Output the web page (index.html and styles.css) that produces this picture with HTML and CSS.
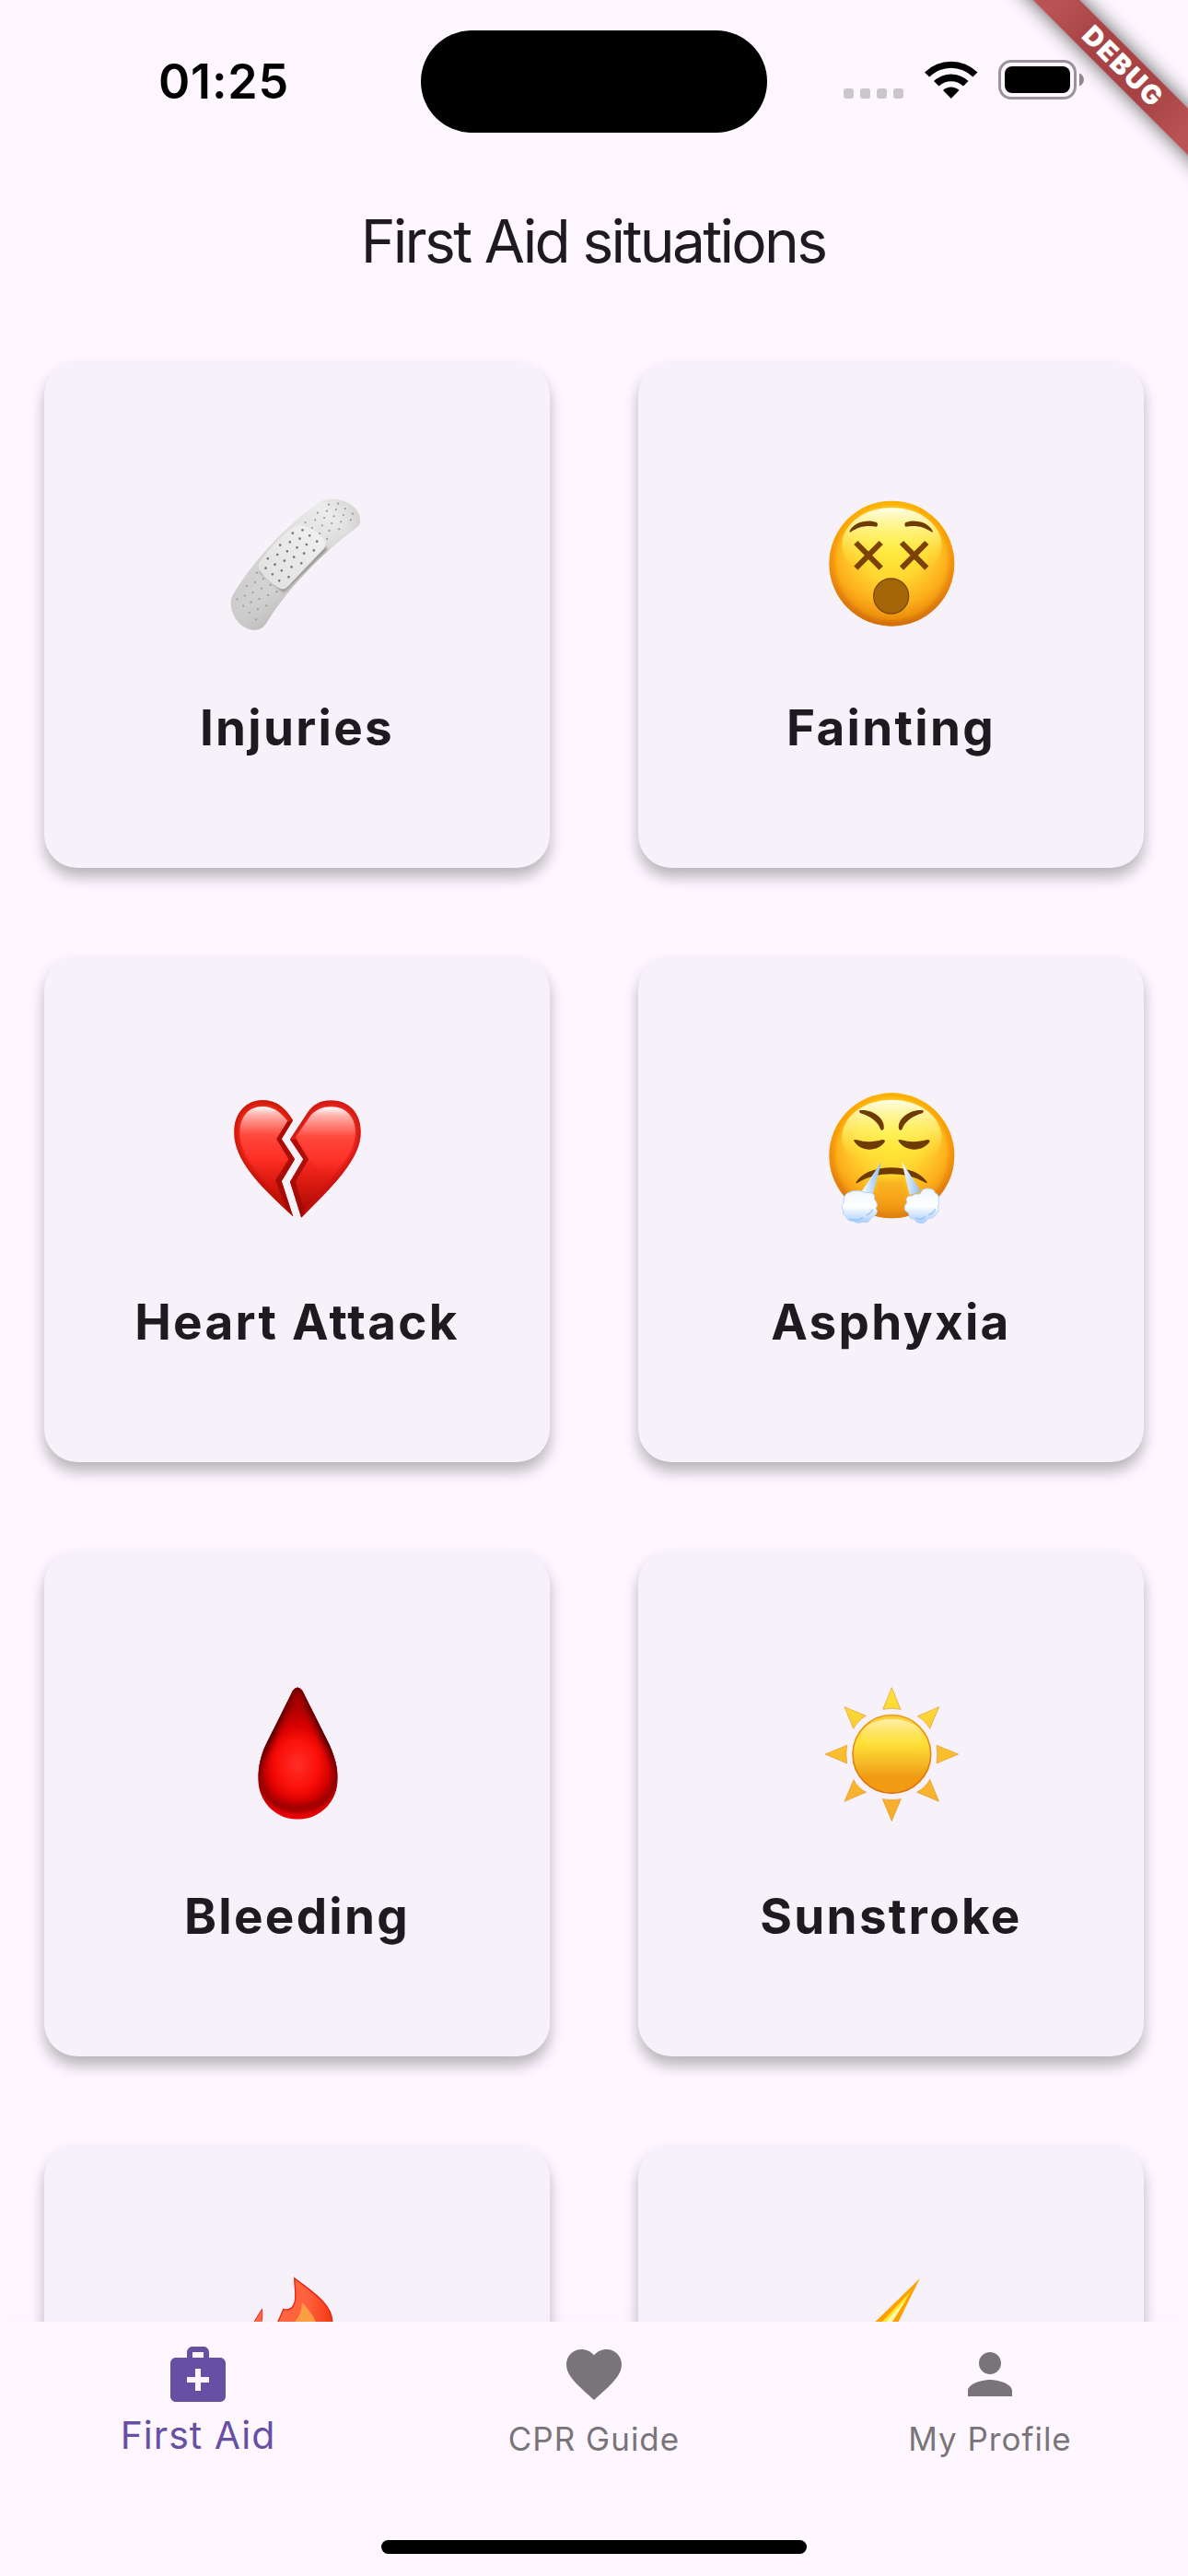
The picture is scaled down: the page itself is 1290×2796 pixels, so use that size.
FILE: index.html
```html
<!DOCTYPE html>
<html lang="en">
<head>
<meta charset="utf-8">
<title>First Aid situations</title>
<link rel="stylesheet" href="styles.css">
</head>
<body>
<div class="screen">
  <header class="status-bar">
    <div class="clock">01:25</div>
    <div class="island"></div>
    <div class="indicators">
      <div class="signal"><i></i><i></i><i></i><i></i></div>
      <svg class="wifi" viewBox="0 0 58 43" aria-hidden="true">
        <path d="M0 13.5 A41 41 0 0 1 57.500 13.500 L52.300 18.500 A33.500 33.500 0 0 0 5.200 18.500Z"/>
        <path d="M10 23 A27 27 0 0 1 47.500 23 L42 28.500 A19.500 19.500 0 0 0 15.500 28.500Z"/>
        <path d="M20 33 A12.500 12.500 0 0 1 37.500 33 L28.750 42Z"/>
      </svg>
      <svg class="battery" viewBox="0 0 94 43" aria-hidden="true">
        <rect x="1.5" y="1.500" width="82" height="40" rx="12.500" fill="none" stroke="#9a959b" stroke-width="3"/>
        <rect x="7" y="7" width="71" height="29" rx="8"/>
        <path d="M88 14.500 C94.500 17 94.500 26 88 28.500Z" fill="#8e898f"/>
      </svg>
    </div>
  </header>
  <div class="debug-banner">DEBUG</div>

  <h1 class="title">First Aid situations</h1>

  <main class="grid">
    <section class="card">
      <svg class="emoji" viewBox="-7.5 0 630 630" aria-hidden="true">
        <defs>
          <linearGradient id="tape" x1="0" y1="1" x2="1" y2="0"><stop offset="0" stop-color="#c8c8c9"/><stop offset=".5" stop-color="#d8d8d9"/><stop offset=".8" stop-color="#ececec"/><stop offset="1" stop-color="#cacacb"/></linearGradient>
          <linearGradient id="pad" x1="0" y1="1" x2="1" y2="0"><stop offset="0" stop-color="#e0e0e1"/><stop offset="1" stop-color="#f1f1f1"/></linearGradient>
          <linearGradient id="tapeEdge" x1=".4" y1=".4" x2=".6" y2=".6"><stop offset="0" stop-color="#fff" stop-opacity="0"/><stop offset="1" stop-color="#999" stop-opacity=".25"/></linearGradient>
          <filter id="soft" x="-20%" y="-20%" width="140%" height="140%"><feGaussianBlur stdDeviation="5"/></filter>
          <clipPath id="tapeShape"><path d="M405 95 C455 92 515 115 512 173 Q510 181 500 188 C390 270 285 375 212 490 C198 515 185 524 160 521 C120 516 85 470 91 425 C92 414 100 401 110 386 C170 290 280 170 385 101 Q394 96 405 95Z"/></clipPath>
        </defs>
        <g clip-path="url(#tapeShape)">
          <rect x="80" y="80" width="450" height="450" fill="url(#tape)"/>
          <rect x="80" y="80" width="450" height="450" fill="url(#tapeEdge)"/>
          <path d="M190 325 L262 388 L400 252" fill="none" stroke="#777" stroke-opacity=".7" stroke-width="18" stroke-linejoin="round" filter="url(#soft)"/>
        </g>
        <path d="M325 180 C350 185 380 205 395 226 Q404 240 393 255 L275 378 Q262 393 247 382 C225 368 198 345 186 325 Q179 312 188 299 C220 253 255 216 298 184 Q310 176 325 180Z" fill="url(#pad)" stroke="#e6e6e7" stroke-width="4"/>
        <g fill="none" stroke="#777" stroke-width="8" stroke-linecap="round">
          <path d="M324 196h.1M292 206h.1M347 214h.1M371 233h.1M315 224h.1M283 235h.1M337 243h.1M251 245h.1M306 253h.1M361 262h.1M274 265h.1M329 272h.1M242 276h.1M296 284h.1M211 289h.1M265 296h.1M320 304h.1M234 308h.1M288 316h.1M204 320h.1M256 328h.1M226 340h.1M279 349h.1M248 361h.1"/>
          <path stroke="#999" stroke-width="6.500" d="M410 113h.1M440 110h.1M463 126h.1M487 143h.1M433 129h.1M403 134h.1M373 140h.1M457 147h.1M426 151h.1M395 156h.1M365 163h.1M481 163h.1M449 169h.1M419 174h.1M388 181h.1M333 171h.1M355 189h.1M443 193h.1M411 198h.1M380 207h.1M404 225h.1M175 335h.1M196 355h.1M169 366h.1M142 378h.1M219 375h.1M191 386h.1M162 399h.1M240 397h.1M212 408h.1M136 410h.1M111 421h.1M183 420h.1M156 431h.1M131 443h.1M206 442h.1M178 454h.1M151 465h.1M173 487h.1"/>
        </g>
      </svg>
      <h2 class="label">Injuries</h2>
    </section>

    <section class="card">
      <svg class="emoji" viewBox="-21 0 630 630" aria-hidden="true">
        <defs>
          <radialGradient id="face" cx=".5" cy=".36" r=".66"><stop offset="0" stop-color="#ffeb36"/><stop offset=".4" stop-color="#ffd832"/><stop offset=".7" stop-color="#fdb01c"/><stop offset="1" stop-color="#e27a05"/></radialGradient>
          <linearGradient id="rim" x1="0" y1="0" x2="0" y2="1"><stop offset="0" stop-color="#fdb000"/><stop offset=".5" stop-color="#f48f0a"/><stop offset="1" stop-color="#d07008"/></linearGradient>
          <linearGradient id="gloss" x1="0" y1="0" x2="0" y2="1"><stop offset="0" stop-color="#fffde8"/><stop offset=".4" stop-color="#fff87a" stop-opacity=".65"/><stop offset=".8" stop-color="#ffe93a" stop-opacity="0"/></linearGradient>
          <filter id="rimBlur" x="-10%" y="-10%" width="120%" height="120%"><feGaussianBlur stdDeviation="7"/></filter>
          <clipPath id="faceClip"><circle cx="295" cy="305" r="204"/></clipPath>
        </defs>
        <g clip-path="url(#faceClip)">
          <circle cx="295" cy="305" r="204" fill="url(#face)"/>
          <circle cx="295" cy="305" r="200" fill="none" stroke="url(#rim)" stroke-width="26" filter="url(#rimBlur)"/>
          <ellipse cx="295" cy="245" rx="162" ry="122" fill="url(#gloss)"/>
        </g>
        <g fill="#6f3b04">
          <path d="M157 201 C170 168 220 160 246 171 Q252 178 246 185 C212 180 188 184 160 203Z"/>
          <path d="M429 201 C416 168 366 160 340 171 Q334 178 340 185 C374 180 398 184 426 203Z"/>
        </g>
        <g fill="none" stroke="#7b4204" stroke-width="18">
          <path d="M178 237 L260 320 M260 237 L178 320 M327 237 L409 320 M409 237 L327 320"/>
        </g>
        <circle cx="293" cy="411" r="57" fill="#a5660a" stroke="#804906" stroke-width="4"/>
      </svg>
      <h2 class="label">Fainting</h2>
    </section>

    <section class="card">
      <svg class="emoji" viewBox="-7.5 15 630 630" aria-hidden="true">
        <defs>
          <linearGradient id="heart" x1="0" y1="0" x2="0" y2="1"><stop offset="0" stop-color="#ee2a1e"/><stop offset=".5" stop-color="#fb2c20"/><stop offset=".7" stop-color="#d91a10"/><stop offset="1" stop-color="#9e0503"/></linearGradient>
          <linearGradient id="heartGloss" x1="0" y1="0" x2="0" y2="1"><stop offset="0" stop-color="#fff"/><stop offset=".12" stop-color="#ffb3ad"/><stop offset=".42" stop-color="#ff4a3f"/><stop offset="1" stop-color="#ff3025" stop-opacity="0"/></linearGradient>
          <clipPath id="hl"><path d="M293 198 C270 160 240 132 195 132 C140 132 101 175 101 237 C101 335 200 425 293 511 L256 396 L299 325 L256 259Z"/></clipPath>
          <clipPath id="hr"><path d="M283 260 L340 173 C358 149 380 133 417 133 C475 133 514 175 514 237 C514 325 420 415 320 515 L283 398 L326 325Z"/></clipPath>
        </defs>
        <g clip-path="url(#hl)">
          <rect x="95" y="125" width="210" height="395" fill="url(#heart)"/>
          <path d="M293 511 L256 396 L299 325 L256 259 L293 198 C270 160 240 132 195 132 C140 132 101 175 101 237 C101 335 200 425 293 511Z" fill="none" stroke="#bd0e08" stroke-width="26" stroke-opacity=".65" filter="url(#soft)"/>
          <path d="M275 200 C250 168 225 153 195 153 C145 153 120 190 120 238 C120 295 155 350 205 370 L280 325 L240 259Z" fill="url(#heartGloss)"/>
          <path d="M293 198 L256 259 L299 325 L256 396 L293 511 L270 482 L236 393 L279 325 L239 259 L275 202Z" fill="#a00905" fill-opacity=".85"/>
        </g>
        <g clip-path="url(#hr)">
          <rect x="275" y="125" width="245" height="395" fill="url(#heart)"/>
          <path d="M283 260 L340 173 C358 149 380 133 417 133 C475 133 514 175 514 237 C514 325 420 415 320 515" fill="none" stroke="#c3100a" stroke-width="26" stroke-opacity=".65" filter="url(#soft)"/>
          <path d="M302 252 L352 180 C370 163 388 154 417 154 C468 154 496 190 496 237 C496 290 460 350 400 385 L345 325Z" fill="url(#heartGloss)"/>
          <path d="M283 260 L326 325 L283 398 L320 515 L332 500 L301 398 L344 325 L303 260Z" fill="#a00905" fill-opacity=".85"/>
        </g>
      </svg>
      <h2 class="label">Heart Attack</h2>
    </section>

    <section class="card">
      <svg class="emoji" viewBox="-21 15 630 630" aria-hidden="true">
        <defs>
          <linearGradient id="steam" x1="0" y1="0" x2="0" y2="1"><stop offset="0" stop-color="#eef6ff"/><stop offset=".5" stop-color="#fff"/><stop offset="1" stop-color="#a9cdfb"/></linearGradient>
          <linearGradient id="jet" x1="0" y1="0" x2="1" y2="0"><stop offset="0" stop-color="#fafdff"/><stop offset="1" stop-color="#8ebcf2"/></linearGradient>
          <filter id="puffBlur" x="-10%" y="-10%" width="120%" height="120%"><feGaussianBlur stdDeviation="7"/></filter>
        </defs>
        <g transform="translate(0 8)">
          <g clip-path="url(#faceClip)">
            <circle cx="295" cy="305" r="204" fill="url(#face)"/>
            <circle cx="295" cy="305" r="200" fill="none" stroke="url(#rim)" stroke-width="26" filter="url(#rimBlur)"/>
            <ellipse cx="295" cy="245" rx="162" ry="122" fill="url(#gloss)"/>
            <path d="M250 385 H335 L350 520 H235Z" fill="#f09a1a" fill-opacity=".4" filter="url(#puffBlur)"/>
          </g>
        </g>
        <g fill="#6f3b04">
          <path d="M190 166 C228 160 275 190 269 226 Q266 233 259 229 C252 204 225 184 193 175 Q187 170 190 166Z"/>
          <path d="M397 166 C360 160 312 190 318 226 Q321 233 328 229 C335 204 362 184 394 175 Q401 170 397 166Z"/>
          <path d="M171 264 Q173 259 181 262 C210 270 237 269 264 261 Q273 260 273 267 C250 302 192 302 171 264Z"/>
          <path d="M316 264 Q318 259 326 262 C355 270 383 269 410 261 Q419 260 419 267 C396 302 338 302 316 264Z"/>
          <path d="M178 401 C215 335 372 335 411 401 Q408 404 402 400 C340 364 245 364 187 400 Q180 405 178 401Z"/>
        </g>
        <path d="M262 332 L195 432 L232 443Z" fill="url(#jet)"/>
        <path d="M327 332 L390 430 L353 441Z" fill="url(#jet)"/>
        <path d="M150 435 Q170 425 184 427 Q205 430 210 434 Q230 430 238 443 Q236 455 244 463 Q252 475 243 484 Q252 495 241 507 Q232 513 226 517 Q222 534 203 529 Q180 536 170 526 Q150 528 146 510 Q132 505 138 492 Q128 480 138 466 Q136 445 150 435Z" fill="url(#steam)" stroke="#b5d3fa" stroke-width="3"/>
        <path d="M342 455 Q345 443 360 444 Q372 435 387 438 Q395 418 413 420 Q432 420 436 434 Q452 442 447 458 Q453 470 444 478 Q454 492 440 502 Q432 520 413 517 Q405 534 388 533 Q372 530 367 519 Q350 520 350 500 Q334 492 337 480 Q335 475 344 468Z" fill="url(#steam)" stroke="#b5d3fa" stroke-width="3"/>
        <path d="M160 520 Q180 528 200 516 M214 506 Q228 500 232 490 M375 516 Q388 525 402 514 M416 506 Q432 500 436 488" fill="none" stroke="#8fbdf6" stroke-opacity=".6" stroke-width="6" stroke-linecap="round"/>
      </svg>
      <h2 class="label">Asphyxia</h2>
    </section>

    <section class="card">
      <svg class="emoji" viewBox="-6 0 630 630" aria-hidden="true">
        <defs>
          <radialGradient id="blood" gradientUnits="userSpaceOnUse" cx="310" cy="345" r="150" gradientTransform="translate(0 -69) scale(1 1.2)"><stop offset="0" stop-color="#ff2e28"/><stop offset=".45" stop-color="#fa1009"/><stop offset=".7" stop-color="#d80000"/><stop offset="1" stop-color="#b30000"/></radialGradient>
          <linearGradient id="dropEdge" x1="0" y1="0" x2="0" y2="1"><stop offset="0" stop-color="#6d0000"/><stop offset=".45" stop-color="#3c0000"/><stop offset=".75" stop-color="#7a0000"/><stop offset=".9" stop-color="#9a0000"/></linearGradient>
          <filter id="dropBlur" x="-20%" y="-20%" width="140%" height="140%"><feGaussianBlur stdDeviation="11"/></filter>
          <clipPath id="drop"><path d="M294 105 Q309 84 325 105 L414 283 C430 320 440 355 440 390 C440 465 385 524 310 524 C235 524 181 465 181 390 C181 355 190 315 205 283Z"/></clipPath>
        </defs>
        <g clip-path="url(#drop)">
          <rect x="170" y="85" width="280" height="450" fill="#f00004"/>
          <path d="M294 100 Q309 78 325 100 L414 283 C430 320 442 350 440 375 C436 450 385 502 310 502 C235 502 185 450 179 375 C180 350 190 315 205 283Z" fill="url(#blood)"/>
          <path d="M294 100 Q309 78 325 100 L414 283 C430 320 442 350 440 375 C436 445 385 488 310 488 C235 488 185 445 179 375 C180 350 190 315 205 283Z" fill="none" stroke="url(#dropEdge)" stroke-width="26" filter="url(#dropBlur)"/>
        </g>
      </svg>
      <h2 class="label">Bleeding</h2>
    </section>

    <section class="card">
      <svg class="emoji" viewBox="-21 0 630 630" aria-hidden="true">
        <defs>
          <linearGradient id="sun" x1="0" y1="0" x2="0" y2="1"><stop offset="0" stop-color="#f9cf3c"/><stop offset=".35" stop-color="#ffe135"/><stop offset=".6" stop-color="#f5bc28"/><stop offset=".8" stop-color="#f09a12"/><stop offset="1" stop-color="#f39d16"/></linearGradient>
          <linearGradient id="sunGloss" x1="0" y1="0" x2="0" y2="1"><stop offset="0" stop-color="#fff0b0"/><stop offset="1" stop-color="#ffe135" stop-opacity="0"/></linearGradient>
          <linearGradient id="sunRim" x1="0" y1="0" x2="0" y2="1"><stop offset="0" stop-color="#e9a21c"/><stop offset="1" stop-color="#dd6f0c"/></linearGradient>
          <linearGradient id="rays" gradientUnits="userSpaceOnUse" x1="0" y1="95" x2="0" y2="530"><stop offset="0" stop-color="#fbe63a"/><stop offset=".5" stop-color="#f9bd2e"/><stop offset="1" stop-color="#f5ac2c"/></linearGradient>
        </defs>
        <g fill="url(#rays)" stroke="#e08a1a" stroke-opacity=".55" stroke-width="3" stroke-linejoin="round">
          <path d="M295 95 L324 166 Q295 160 266 166Z"/>
          <path d="M449 158 L419 229 Q402 200 379 188Z"/>
          <path d="M512 312 L441 342 Q446 312 441 283Z"/>
          <path d="M449 466 L377 436 Q406 420 419 394Z"/>
          <path d="M295 530 L265 458 Q295 463 325 458Z"/>
          <path d="M141 466 L171 395 Q184 422 212 436Z"/>
          <path d="M78 312 L149 283 Q144 312 149 342Z"/>
          <path d="M141 158 L211 187 Q184 203 170 229Z"/>
        </g>
        <circle cx="295" cy="312" r="127" fill="url(#sun)" stroke="url(#sunRim)" stroke-width="5"/>
        <ellipse cx="295" cy="253" rx="100" ry="55" fill="url(#sunGloss)"/>
      </svg>
      <h2 class="label">Sunstroke</h2>
    </section>

    <section class="card">
      <svg class="emoji" viewBox="-97.5 15 630 630" aria-hidden="true">
        <defs>
          <linearGradient id="flame" x1="0" y1="0" x2="1" y2="0"><stop offset="0" stop-color="#ff7043"/><stop offset=".65" stop-color="#ff5f3d"/><stop offset="1" stop-color="#f33a12"/></linearGradient>
        </defs>
        <path d="M102 199 C104 225 102 235 98 248 L105 310 L45 310 C55 270 80 235 102 199Z" fill="#ff6a4a" stroke="#e92b1c" stroke-width="3"/>
        <path d="M208 98 C260 140 330 180 331 240 C335 330 300 500 190 500 C60 500 100 330 154 240 Q165 218 172 199 Q200 207 209 175 C215 145 207 125 208 98Z" fill="url(#flame)" stroke="#e8230f" stroke-width="4"/>
        <path d="M232 177 C255 200 272 225 277 242 C280 300 250 400 210 400 C170 360 190 280 209 240 C225 220 231 205 232 177Z" fill="#ff9f43"/>
      </svg>
    </section>

    <section class="card">
      <svg class="emoji" viewBox="-112.5 15 630 630" aria-hidden="true">
        <path d="M295 99 L213 265 L290 265 L60 520 L150 315 L70 315 L150 240Z" fill="#ffa200"/>
        <path d="M268 138 L206 240 L195 285 L130 285 L172 240Z" fill="#ffe82e"/>
        <path d="M250 168 L205 240 L190 275 L160 265 L185 240Z" fill="#fffbb5"/>
      </svg>
    </section>
  </main>

  <nav class="tab-bar">
    <a class="tab tab-active">
      <svg class="tab-icon" viewBox="0 0 24 24" aria-hidden="true"><path d="M20 6h-4V4c0-1.100-.9-2-2-2h-4c-1.100 0-2 .9-2 2v2H4c-1.100 0-2 .9-2 2v12c0 1.100.9 2 2 2h16c1.100 0 2-.9 2-2V8c0-1.100-.9-2-2-2zM10 4h4v2h-4V4zm6 11h-3v3h-2v-3H8v-2h3v-3h2v3h3v2z"/></svg>
      <span class="tab-label">First Aid</span>
    </a>
    <a class="tab">
      <svg class="tab-icon" viewBox="0 0 24 24" aria-hidden="true"><path d="M12 21.350l-1.450-1.320C5.400 15.360 2 12.280 2 8.500 2 5.420 4.420 3 7.500 3c1.740 0 3.410.81 4.500 2.090C13.090 3.810 14.760 3 16.500 3 19.580 3 22 5.420 22 8.500c0 3.780-3.400 6.860-8.550 11.540L12 21.350z"/></svg>
      <span class="tab-label">CPR Guide</span>
    </a>
    <a class="tab">
      <svg class="tab-icon" viewBox="0 0 24 24" aria-hidden="true"><path d="M12 12c2.210 0 4-1.790 4-4s-1.790-4-4-4-4 1.790-4 4 1.790 4 4 4zm0 2c-2.670 0-8 1.340-8 4v2h16v-2c0-2.660-5.330-4-8-4z"/></svg>
      <span class="tab-label">My Profile</span>
    </a>
    <div class="home-indicator"></div>
  </nav>
</div>
</body>
</html>
```
FILE: styles.css
```css
* {
  box-sizing: border-box;
}

body {
  margin: 0;
  background: #fef7ff;
  color: #1d1b20;
  font-family: Inter, "Liberation Sans", sans-serif;
}

.screen {
  position: relative;
  display: flex;
  flex-direction: column;
  width: 1290px;
  height: 2796px;
  overflow: hidden;
  background: #fef7ff;
}

.status-bar {
  display: grid;
  grid-template-columns: 457px 376px 457px;
  flex: none;
  height: 177px;
  color: #000;
}

.clock {
  padding: 59px 0 0 172px;
  font-size: 52px;
  font-weight: 600;
  line-height: 60px;
  letter-spacing: 0.8px;
}

.island {
  height: 111px;
  margin-top: 33px;
  border-radius: 56px;
  background: #000;
}

.indicators {
  display: flex;
  padding: 65px 0 0 83px;
}

.signal {
  display: flex;
  gap: 7px;
  margin: 31px 23px 0 0;
}

.signal i {
  width: 11px;
  height: 11px;
  border-radius: 3px;
  background: #cbc5cc;
}

.wifi {
  width: 58px;
  height: 43px;
  margin-right: 22px;
}

.battery {
  width: 94px;
  height: 43px;
}

.debug-banner {
  position: absolute;
  top: 53px;
  left: 1018px;
  z-index: 2;
  width: 400px;
  height: 36px;
  background: linear-gradient(90deg, #b95355 25%, #a74344 40%, #a74344 60%, #b95355 75%);
  box-shadow: 0 0 22px rgba(0, 0, 0, 0.65);
  color: #fff;
  font-size: 29px;
  font-weight: 900;
  line-height: 36px;
  letter-spacing: 2px;
  text-align: center;
  text-indent: 4px;
  transform: rotate(45deg);
}

.title {
  flex: none;
  height: 168px;
  margin: 0;
  padding-right: 2px;
  font-size: 64px;
  font-weight: 400;
  line-height: 170px;
  letter-spacing: -2.65px;
  text-align: center;
}

.grid {
  display: grid;
  grid-template-columns: 549px 549px;
  grid-auto-rows: 549px;
  gap: 96px;
  flex: 1;
  min-height: 0;
  padding: 48px;
  overflow: hidden;
}

.card {
  display: flex;
  flex-direction: column;
  align-items: center;
  gap: 37px;
  padding-top: 117px;
  border-radius: 36px;
  background: #f7f2fa;
  box-shadow: 0 10px 16px rgba(0, 0, 0, 0.28);
}

.emoji {
  flex: none;
  width: 210px;
  height: 210px;
}

.label {
  margin: 0;
  font-size: 53px;
  font-weight: 650;
  line-height: 66px;
  letter-spacing: 2.3px;
}

.tab-bar {
  display: grid;
  grid-template-columns: repeat(3, 1fr);
  grid-template-rows: 237px 15px;
  flex: none;
  position: relative;
  height: 276px;
  background: #fef7ff;
  box-shadow: 0 0 24px rgba(0, 0, 0, 0.02);
}

.tab {
  display: flex;
  flex-direction: column;
  align-items: center;
  padding-top: 21px;
  color: #79747a;
}

.tab-active {
  color: #6750a4;
}

.tab-icon {
  width: 72px;
  height: 72px;
  fill: currentColor;
}

.tab-label {
  margin-top: 9px;
  font-size: 35px;
  line-height: 50px;
  letter-spacing: 1px;
}

.tab-active .tab-label {
  margin-top: 5px;
  font-size: 41px;
}

.home-indicator {
  grid-column: 1 / -1;
  justify-self: center;
  width: 462px;
  height: 15px;
  border-radius: 8px;
  background: #000;
}
```
